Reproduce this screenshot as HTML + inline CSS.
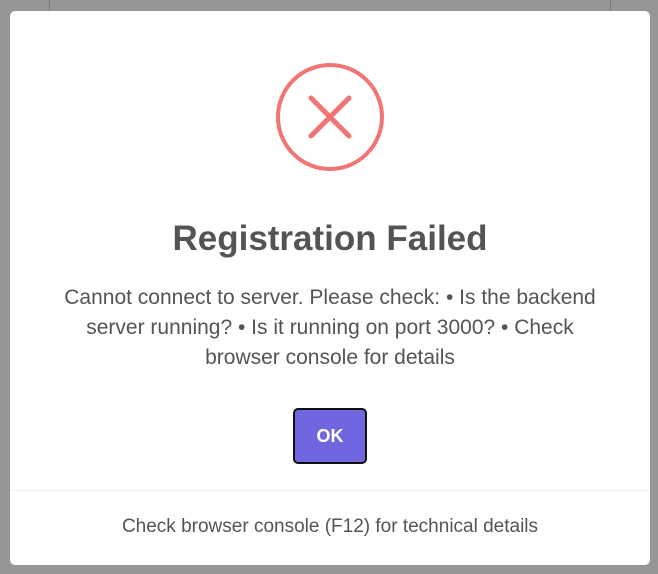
<!DOCTYPE html>
<html><head><style>
body{margin:0;width:658px;height:574px;background:#969696;position:relative;overflow:hidden;font-family:"Liberation Sans",sans-serif}
.l{position:absolute;top:0;width:1px;height:11px;background:#7a7a7a}
.m{position:absolute;left:10px;top:11px;width:640px;height:554px;background:#fff;border-radius:5px}
.t{position:absolute;left:0;right:0;top:208px;text-align:center;font-size:35px;font-weight:bold;color:#545454}
.p{position:absolute;left:50px;right:50px;top:272px;text-align:center;font-size:21px;line-height:30px;color:#545454}
.b{position:absolute;left:283px;top:397px;width:74px;height:56px;box-sizing:border-box;background:#7066e0;border:2px solid #111;border-radius:5px;color:#fff;font-weight:bold;font-size:18px;text-align:center;line-height:52px}
.f{position:absolute;left:0;right:0;top:479px;border-top:1px solid #eee;text-align:center;font-size:19px;color:#545454;padding-top:25px}
</style></head><body>
<div class="l" style="left:49px"></div><div class="l" style="left:610px"></div>
<div class="m">
<svg style="position:absolute;left:264px;top:51px" width="112" height="112"><circle cx="56" cy="55" r="52" fill="none" stroke="#f27474" stroke-width="4"/><path d="M37 36L75 74M75 36L37 74" stroke="#f27474" stroke-width="5" stroke-linecap="round"/></svg>
<div class="t">Registration Failed</div>
<div class="p">Cannot connect to server. Please check: • Is the backend server running? • Is it running on port 3000? • Check browser console for details</div>
<div class="b">OK</div>
<div class="f">Check browser console (F12) for technical details</div>
</div>
</body></html>
